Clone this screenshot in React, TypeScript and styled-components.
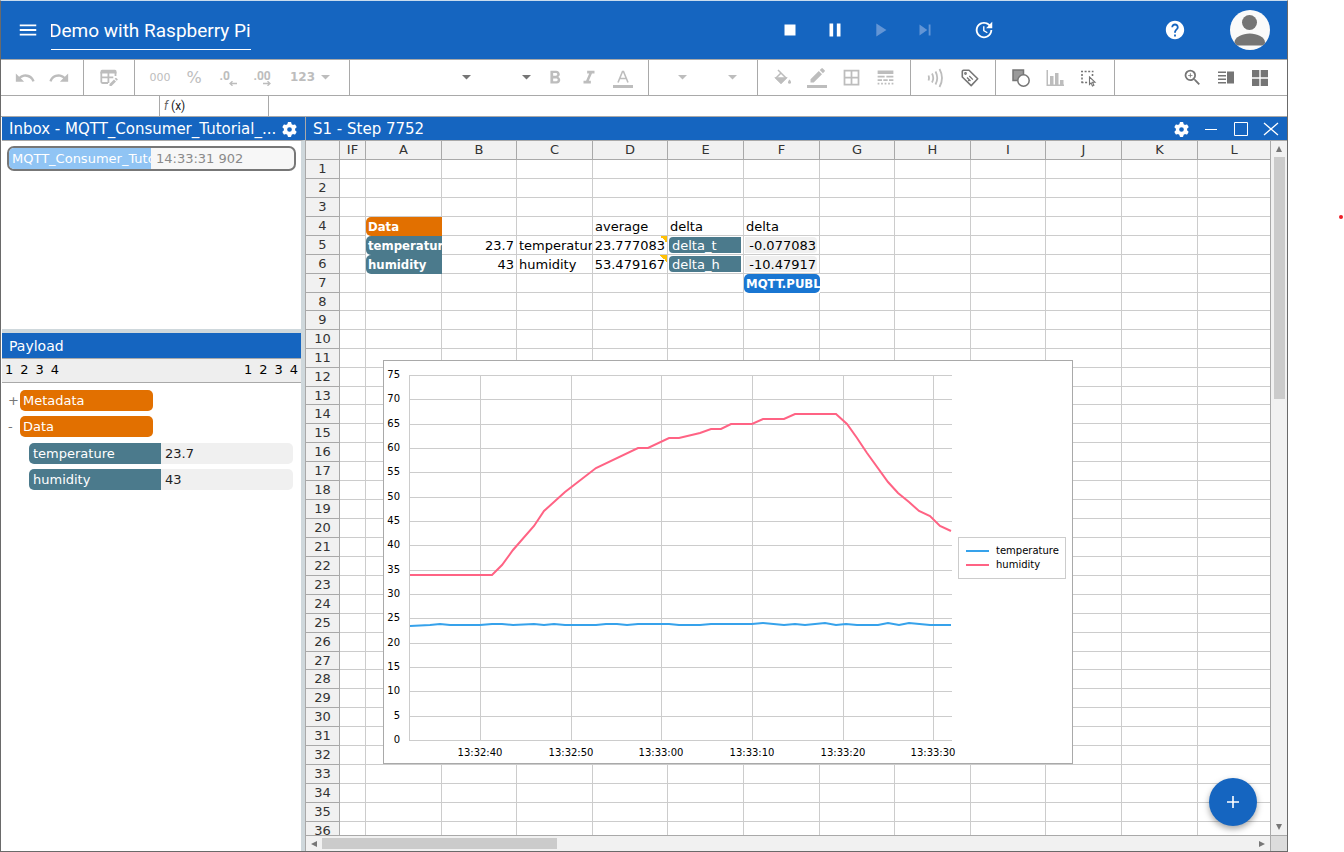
import React from 'react';
import styled, { createGlobalStyle, css } from 'styled-components';
import {
  MdMenu, MdStop, MdPause, MdPlayArrow, MdSkipNext, MdUpdate, MdHelp, MdUndo, MdRedo,
  MdFormatBold, MdFormatItalic, MdBorderAll, MdLineStyle, MdZoomIn,
} from 'react-icons/md';
import { FaGear } from 'react-icons/fa6';

const blue = '#1565c0';
const line = '#a9a9a9';
const splitter = '#cfd8dc';
const sans = "Verdana, 'DejaVu Sans', sans-serif";
const roboto = "Roboto, 'Liberation Sans', sans-serif";

const Global = createGlobalStyle`
  * { box-sizing: border-box; }
  body { margin: 0; background: #fff; font: 13px/17px ${sans}; color: #222; overflow: hidden; }
  button, input, select { font: inherit; color: inherit; background: none; border: 0; padding: 0; margin: 0; outline: 0; }
  button { cursor: pointer; }
  svg { display: block; flex: none; }
`;

const Page = styled.div`
  height: 100vh;
  padding-right: 56px;
  position: relative;
`;
const RedDot = styled.span`
  position: absolute;
  right: 1px;
  top: 215px;
  width: 4px;
  height: 4px;
  border-radius: 2px;
  background: #ee1c25;
`;
const Frame = styled.div`
  height: 100%;
  display: flex;
  flex-direction: column;
  border: 1px solid #6a6a6a;
  border-top-color: #c9dcee;
`;

const Header = styled.header`
  height: 59px;
  flex: none;
  display: flex;
  align-items: center;
  background: ${blue};
  border-bottom: 1px solid ${line};
  color: #fff;
  padding: 0 17px 0 16px;
`;
const TitleInput = styled.input`
  width: 200px;
  height: 38px;
  margin: 1px auto 0 12px;
  font: 19px/24px ${roboto};
  border-bottom: 1px solid #fff;
  text-indent: -2px;
`;
const HeaderButton = styled.button<{ $dim?: boolean }>`
  width: 22px;
  height: 22px;
  color: ${p => (p.$dim ? '#6395d5' : '#fff')};
`;
const Transport = styled.div`
  display: flex;
  gap: 23px;
  margin-right: 37px;
`;
const Spacer = styled.div<{ $w: number }>`
  width: ${p => p.$w}px;
`;
const Avatar = styled.button`
  width: 40px;
  height: 40px;
  margin-left: 44px;
  border-radius: 50%;
  overflow: hidden;
  background: #fafafa;
`;

const Toolbar = styled.div`
  height: 36px;
  flex: none;
  display: flex;
  border-bottom: 1px solid ${line};
`;
const Group = styled.div<{ $pad?: number }>`
  display: flex;
  align-items: center;
  padding: 0 ${p => p.$pad ?? 8}px;
  border-right: 1px solid ${line};
`;
const EndGroup = styled.div`
  display: flex;
  align-items: center;
  margin-left: auto;
  padding-right: 10px;
`;
const Tool = styled.button<{ $on?: boolean; $w?: number }>`
  width: ${p => p.$w ?? 34}px;
  height: 34px;
  display: flex;
  align-items: center;
  justify-content: center;
  color: ${p => (p.$on ? '#757575' : '#bdbdbd')};
`;
const TextTool = styled(Tool)<{ $size: number; $bold?: boolean }>`
  font-size: ${p => p.$size}px;
  font-weight: ${p => (p.$bold ? 700 : 400)};
  gap: 6px;
`;
const Decimal = styled.span`
  width: 17px;
  display: flex;
  flex-direction: column;
  font: 700 12px/10px ${roboto};
  text-align: left;
  padding-top: 2px;
  svg { align-self: flex-end; }
`;
const PickWrap = styled.label<{ $w: number }>`
  width: ${p => p.$w}px;
  height: 26px;
  display: flex;
  align-items: center;
  padding-right: 7px;
  color: #757575;
  & + & { margin-left: 4px; }
  select { flex: 1; min-width: 0; height: 100%; appearance: none; }
`;

const FormulaBar = styled.div`
  height: 21px;
  flex: none;
  display: flex;
  border-bottom: 1px solid ${line};
  font: 12px/20px ${roboto};
`;
const NameBox = styled.input`
  width: 159px;
  border-right: 1px solid ${line};
`;
const Fx = styled.label`
  width: 109px;
  padding-left: 4px;
  border-right: 1px solid ${line};
  i { color: #666; }
`;
const Formula = styled.input`
  flex: 1;
`;

const Body = styled.main`
  flex: 1;
  min-height: 0;
  display: flex;
`;
const Side = styled.aside`
  width: 304px;
  flex: none;
  display: flex;
  flex-direction: column;
  padding-left: 1px;
`;
const PanelTitle = styled.h2<{ $sub?: boolean }>`
  height: ${p => (p.$sub ? 25 : 23)}px;
  flex: none;
  margin: 0;
  padding: 1px 8px 0 7px;
  display: flex;
  align-items: center;
  background: ${blue};
  color: #fff;
  font-size: ${p => (p.$sub ? 14 : 15)}px;
  font-weight: 400;
  white-space: nowrap;
`;
const TitleText = styled.span`
  flex: 1;
`;
const IconButton = styled.button`
  width: 16px;
  height: 16px;
  display: flex;
  align-items: center;
  justify-content: center;
`;
const InboxArea = styled.div`
  height: 189px;
  flex: none;
  padding: 5px 5px 0;
  border-top: 1px solid ${line};
  border-right: 4px solid ${splitter};
`;
const InboxItem = styled.div`
  height: 25px;
  display: flex;
  border: 2px solid #777;
  border-radius: 7px;
  overflow: hidden;
  background: #f7f7f7;
  line-height: 21px;
  color: #8a8a8a;
`;
const InboxName = styled.span`
  width: 142px;
  flex: none;
  padding-left: 3px;
  margin-right: 5px;
  overflow: hidden;
  white-space: nowrap;
  background: #90c4f4;
  color: #fff;
`;
const PayloadArea = styled.section`
  flex: 1;
  border-top: 4px solid ${splitter};
  border-right: 4px solid ${splitter};
`;
const Levels = styled.div`
  height: 25px;
  display: flex;
  align-items: center;
  justify-content: space-between;
  padding: 0 3px 2px;
  background: #eee;
  border: solid ${line};
  border-width: 1px 0;
  color: #000;
`;
const LevelSet = styled.div`
  display: flex;
  gap: 7px;
`;
const Tree = styled.div`
  padding: 7px 8px 0 6px;
  display: flex;
  flex-direction: column;
  gap: 5px;
`;
const Node = styled.div`
  display: flex;
  height: 21px;
  line-height: 21px;
`;
const Toggle = styled.button`
  width: 12px;
  color: #777;
  text-align: left;
`;
const Folder = styled.span`
  width: 133px;
  padding-left: 3px;
  border-radius: 5px;
  background: #e27000;
  color: #fff;
`;
const Leaves = styled.div`
  display: flex;
  flex-direction: column;
  gap: 5px;
  margin-left: 21px;
  padding-top: 1px;
`;
const LeafName = styled.span`
  flex: 1;
  padding-left: 4px;
  border-radius: 5px 0 0 5px;
  background: #4b7a8c;
  color: #fff;
`;
const LeafValue = styled.span`
  flex: 1;
  padding-left: 4px;
  border-radius: 0 5px 5px 0;
  background: #f0f0f0;
`;

const Sheet = styled.section`
  flex: 1;
  min-width: 0;
  display: flex;
  flex-direction: column;
  border-left: 1px solid ${line};
  position: relative;
`;
const WindowButtons = styled.div`
  display: flex;
  gap: 14px;
`;
const SheetRow = styled.div`
  flex: 1;
  min-height: 0;
  display: flex;
  border-top: 1px solid ${line};
`;
const GridArea = styled.div`
  flex: 1;
  min-width: 0;
  overflow: hidden;
  position: relative;
`;
const Grid = styled.table`
  width: 100%;
  table-layout: fixed;
  border-collapse: separate;
  border-spacing: 0;
  th, td {
    height: 19px;
    padding: 0;
    vertical-align: top;
    white-space: nowrap;
    overflow: hidden;
    border: solid #ccc;
    border-width: 0 1px 1px 0;
  }
  tbody tr:is(:nth-child(8), :nth-child(13), :nth-child(27)) > * { height: 18px; }
  th { font-weight: 400; background: #f1f1f1; color: #333; border-color: ${line}; }
  thead th { line-height: 18px; }
  tr > :last-child { border-right: 0; }
`;
type Kind = 'text' | 'num' | 'folder' | 'leaf' | 'key' | 'value' | 'action';
const Cell = styled.div<{ $kind: Kind }>`
  height: 18px;
  line-height: 19px;
  color: #000;
  overflow: hidden;
  ${p => p.$kind === 'text' && css`padding-left: 2px;`}
  ${p => p.$kind === 'num' && css`padding-right: 2px; text-align: right;`}
  ${p => (p.$kind === 'folder' || p.$kind === 'leaf' || p.$kind === 'action') && css`
    height: 19px;
    padding-left: 2px;
    line-height: 20px;
    font-family: 'DejaVu Sans Condensed', 'DejaVu Sans', sans-serif;
    font-weight: 700;
    color: #fff;
    background: ${p.$kind === 'folder' ? '#e27000' : p.$kind === 'leaf' ? '#4b7a8c' : '#1976d2'};
    border-radius: ${p.$kind === 'action' ? '5px' : '5px 0 0 5px'};
  `}
  ${p => (p.$kind === 'key' || p.$kind === 'value') && css`
    height: 16px;
    margin: 1px 2px 1px 1px;
    line-height: 17px;
  `}
  ${p => p.$kind === 'key' && css`
    padding-left: 3px;
    background: #4b7a8c;
    color: #fff;
    border-radius: 4px 0 0 4px;
  `}
  ${p => p.$kind === 'value' && css`
    padding-right: 1px;
    text-align: right;
    background: #f0f0f0;
    border-radius: 0 4px 4px 0;
  `}
`;
const Flagged = styled.td`
  background: linear-gradient(to bottom left, #ffc107 50%, transparent 50%) top right / 7px 7px no-repeat;
`;
const Filled = styled.td`
  && { border-width: 0; }
`;

const VScroll = styled.div`
  width: 17px;
  flex: none;
  display: flex;
  flex-direction: column;
  align-items: center;
  border-left: 1px solid ${line};
  background: #f1f1f1;
`;
const HScroll = styled.div`
  height: 16px;
  flex: none;
  display: flex;
  align-items: center;
  border-top: 1px solid ${line};
  background: #f1f1f1;
`;
const ScrollButton = styled.button`
  width: 16px;
  height: 16px;
  display: flex;
  align-items: center;
  justify-content: center;
  color: #777;
`;
const Thumb = styled.div<{ $vertical?: boolean }>`
  background: #cbcbcb;
  ${p => (p.$vertical
    ? css`width: 11px; height: 242px; margin-bottom: auto;`
    : css`height: 11px; width: 235px; margin-right: auto;`)}
`;
const Corner = styled.div`
  width: 17px;
  height: 100%;
  border-left: 1px solid ${line};
  background: #dcdcdc;
`;
const ChartBox = styled.figure`
  position: absolute;
  left: 77px;
  top: 219px;
  width: 690px;
  height: 404px;
  margin: 0;
  border: 1px solid ${line};
  background: #fff;
  text { font: 10px ${sans}; fill: #000; }
`;
const Fab = styled.button`
  position: absolute;
  right: 30px;
  bottom: 25px;
  width: 48px;
  height: 48px;
  border-radius: 24px;
  display: flex;
  align-items: center;
  justify-content: center;
  background: ${blue};
  color: #fff;
  box-shadow: 0 3px 6px rgba(0, 0, 0, 0.35);
`;

const Caret = () => (
  <svg width="9" height="5" viewBox="0 0 9 5"><path d="M0 0h9L4.500 4.500z" fill="currentColor" /></svg>
);

const cols = [34, 26, 76, 75, 76, 75, 76, 76, 75, 76, 75, 76, 76];
const heads = ['IF', 'A', 'B', 'C', 'D', 'E', 'F', 'G', 'H', 'I', 'J', 'K', 'L'];
const cells: Record<string, [Kind, string]> = {
  A4: ['folder', 'Data'],
  A5: ['leaf', 'temperature'],
  A6: ['leaf', 'humidity'],
  B5: ['num', '23.7'],
  B6: ['num', '43'],
  C5: ['text', 'temperature'],
  C6: ['text', 'humidity'],
  D4: ['text', 'average'],
  D5: ['num', '23.777083'],
  D6: ['num', '53.479167'],
  E4: ['text', 'delta'],
  E5: ['key', 'delta_t'],
  E6: ['key', 'delta_h'],
  F4: ['text', 'delta'],
  F5: ['value', '-0.077083'],
  F6: ['value', '-10.47917'],
  F7: ['action', 'MQTT.PUBLISH'],
};
const flagged = ['D5', 'D6'];
const filled: Kind[] = ['folder', 'leaf', 'action'];

const humidity = '26,214 108,214 118,204 129,189 150,165 160,150 181,131 212,107 254,87 264,87 285,77 295,77 316,72 327,68 337,68 347,63 368,63 379,58 400,58 411,53 452,53 463,63 473,77 483,92 504,121 514,132 525,141 535,150 546,155 556,165 567,170';
const temperature = '26,265 46,264 56,263 66,264 96,264 108,263 118,263 129,264 150,263 160,264 170,263 181,264 212,264 222,263 233,263 243,264 254,263 285,263 295,264 316,264 327,263 368,263 379,262 400,264 411,263 421,264 441,262 452,264 462,263 473,264 494,264 504,262 515,264 525,262 546,264 567,264';
const ticks: [number, string][] = [
  [96, '13:32:40'], [187, '13:32:50'], [277, '13:33:00'], [368, '13:33:10'], [459, '13:33:20'], [549, '13:33:30'],
];

function Chart() {
  return (
    <ChartBox>
      <svg width="688" height="402" role="img" aria-label="temperature and humidity over time">
        <g stroke="#ccc" fill="none">
          {Array.from({ length: 16 }, (_, i) => {
            const y = Math.round(14 + (i * 365) / 15) + 0.5;
            return <path key={i} d={`M25 ${y}H568`} />;
          })}
          <path d="M25.500 14V380" />
          {ticks.map(([x]) => <path key={x} d={`M${x}.5 14V380`} />)}
        </g>
        {Array.from({ length: 16 }, (_, i) => (
          <text key={i} x="16" y={Math.round(17 + (i * 365) / 15)} textAnchor="end">{75 - i * 5}</text>
        ))}
        {ticks.map(([x, t]) => <text key={t} x={x} y="395" textAnchor="middle">{t}</text>)}
        <polyline points={humidity} fill="none" stroke="#ff6384" strokeWidth="2" />
        <polyline points={temperature} fill="none" stroke="#36a2eb" strokeWidth="2" />
        <rect x="574.500" y="176.500" width="107" height="41" fill="#fff" stroke="#ccc" />
        <path d="M582 190h23" stroke="#36a2eb" strokeWidth="2" />
        <path d="M582 204h23" stroke="#ff6384" strokeWidth="2" />
        <text x="612" y="193">temperature</text>
        <text x="612" y="207">humidity</text>
      </svg>
    </ChartBox>
  );
}

function Spreadsheet() {
  return (
    <Grid>
      <colgroup>
        {cols.map((w, i) => <col key={i} width={w} />)}
        <col />
      </colgroup>
      <thead>
        <tr>
          <th />
          {heads.map(h => <th key={h} scope="col">{h}</th>)}
        </tr>
      </thead>
      <tbody>
        {Array.from({ length: 36 }, (_, r) => (
          <tr key={r}>
            <th scope="row">{r + 1}</th>
            {heads.map(h => {
              const id = `${h}${r + 1}`;
              const c = cells[id];
              const Td = flagged.includes(id) ? Flagged : c && filled.includes(c[0]) ? Filled : 'td';
              return <Td key={h}>{c && <Cell $kind={c[0]}>{c[1]}</Cell>}</Td>;
            })}
          </tr>
        ))}
      </tbody>
    </Grid>
  );
}

export default function App() {
  return (
    <Page>
      <Global />
      <Frame>
        <Header>
          <HeaderButton aria-label="Menu"><MdMenu size={22} /></HeaderButton>
          <TitleInput aria-label="Title" defaultValue="Demo with Raspberry Pi" />
          <Transport>
            <HeaderButton aria-label="Stop"><MdStop size={22} /></HeaderButton>
            <HeaderButton aria-label="Pause"><MdPause size={22} /></HeaderButton>
            <HeaderButton aria-label="Play" $dim><MdPlayArrow size={22} /></HeaderButton>
            <HeaderButton aria-label="Step" $dim><MdSkipNext size={22} /></HeaderButton>
          </Transport>
          <HeaderButton aria-label="Update"><MdUpdate size={22} /></HeaderButton>
          <Spacer $w={169} />
          <HeaderButton aria-label="Help"><MdHelp size={22} /></HeaderButton>
          <Avatar aria-label="Account">
            <svg width="40" height="40" viewBox="0 0 40 40" fill="#757575">
              <circle cx="19.500" cy="12.500" r="7.500" />
              <path d="M4.500 35.500v-3c0-5.500 8-9 15.300-9s15.200 3.500 15.200 9v3z" />
            </svg>
          </Avatar>
        </Header>

        <Toolbar>
          <Group $pad={7}>
            <Tool aria-label="Undo"><MdUndo size={22} /></Tool>
            <Tool aria-label="Redo"><MdRedo size={22} /></Tool>
          </Group>
          <Group>
            <Tool aria-label="Edit table">
              <svg width="18" height="18" viewBox="0 0 18 18" fill="none" stroke="currentColor" strokeWidth="1.800">
                <path d="M8 14H2.500a1.200 1.200 0 0 1-1.200-1.200V3M15.500 3v4M1.300 8.300h12M8.400 4v10" />
                <path d="M.5 4.500V2.200A1.500 1.500 0 0 1 2 .7h13a1.500 1.500 0 0 1 1.500 1.500v2.300z" fill="currentColor" stroke="none" />
                <path d="M9.500 17v-2l4.500-4.500 2 2L11.500 17zM14.700 9.800l.8-.8a.6.6 0 0 1 .9 0l1.100 1.100a.6.6 0 0 1 0 .9l-.8.800z" fill="currentColor" stroke="none" />
              </svg>
            </Tool>
          </Group>
          <Group>
            <TextTool $size={11}>000</TextTool>
            <TextTool $size={16}>%</TextTool>
            <Tool aria-label="Fewer decimals">
              <Decimal>.0
                <svg width="8" height="5" viewBox="0 0 8 5"><path d="M8 2.500H1M3.500 .2L1 2.500l2.500 2.300" fill="none" stroke="currentColor" strokeWidth="1.300" /></svg>
              </Decimal>
            </Tool>
            <Tool aria-label="More decimals">
              <Decimal>.00
                <svg width="8" height="5" viewBox="0 0 8 5"><path d="M0 2.500h7M4.500 .2L7 2.500 4.500 4.800" fill="none" stroke="currentColor" strokeWidth="1.300" /></svg>
              </Decimal>
            </Tool>
            <TextTool $size={12} $bold $w={62}>123 <Caret /></TextTool>
          </Group>
          <Group>
            <PickWrap $w={120}><select aria-label="Font"><option /></select><Caret /></PickWrap>
            <PickWrap $w={56}><select aria-label="Font size"><option /></select><Caret /></PickWrap>
            <Tool aria-label="Bold"><MdFormatBold size={22} /></Tool>
            <Tool aria-label="Italic"><MdFormatItalic size={22} /></Tool>
            <Tool aria-label="Text color">
              <svg width="20" height="20" viewBox="0 0 20 20">
                <path d="M5 14.500L9.500 3.500h1L15 14.500M6.800 10.500h6.400" fill="none" stroke="currentColor" strokeWidth="1.600" />
                <path d="M0 17h20v3H0z" fill="currentColor" />
              </svg>
            </Tool>
          </Group>
          <Group $pad={4}>
            <Tool aria-label="Horizontal alignment" $w={58}><Caret /></Tool>
            <Tool aria-label="Vertical alignment" $w={42}><Caret /></Tool>
          </Group>
          <Group>
            <Tool aria-label="Fill color">
              <svg width="18" height="18" viewBox="0 0 18 18" fill="none" stroke="currentColor" strokeWidth="1.500">
                <path d="M4 1l8 8-5 5-5-5 5-5" />
                <path d="M2 9h10l-5 5z" fill="currentColor" />
                <path d="M15.500 10.500c1 1.300 1.500 2 1.500 2.700a1.500 1.500 0 0 1-3 0c0-.7.5-1.400 1.500-2.700z" fill="currentColor" stroke="none" />
              </svg>
            </Tool>
            <Tool aria-label="Border color">
              <svg width="20" height="20" viewBox="0 0 20 20" fill="currentColor">
                <path d="M3.500 14.500v-3.200l8.300-8.300 3.200 3.200-8.300 8.300zM12.700 2.100l1.700-1.700a1 1 0 0 1 1.400 0l1.800 1.800a1 1 0 0 1 0 1.400l-1.700 1.700z" />
                <path d="M0 17h20v3H0z" />
              </svg>
            </Tool>
            <Tool aria-label="Borders"><MdBorderAll size={21} /></Tool>
            <Tool aria-label="Line style"><MdLineStyle size={21} /></Tool>
          </Group>
          <Group>
            <Tool aria-label="Stream">
              <svg width="18" height="20" viewBox="0 0 18 20" fill="none" stroke="currentColor" strokeWidth="1.800">
                <path d="M1.500 7.500q1 2.500 0 5M5 5.500q2.500 4.500 0 9M8.500 3.500q3.500 6.500 0 13M12.500 1q5 9 0 18" />
              </svg>
            </Tool>
            <Tool aria-label="Tag" $on>
              <svg width="18" height="18" viewBox="0 0 18 18" fill="none" stroke="currentColor" strokeWidth="1.600">
                <path d="M2.500 1.200H8l8.700 8.600-6.500 6.800L1.300 8V2.400a1.200 1.200 0 0 1 1.200-1.200z" strokeLinejoin="round" />
                <circle cx="4.500" cy="4.500" r=".6" />
                <path d="M6 8.500l3.500 3.500M8.300 7l3.600 3.600M7.200 11l1 1" strokeWidth="1.300" />
              </svg>
            </Tool>
          </Group>
          <Group>
            <Tool aria-label="Shapes" $on>
              <svg width="18" height="18" viewBox="0 0 18 18" stroke="currentColor" strokeWidth="1.500">
                <path d="M1 1h10.500v10.500H1z" fill="#9a9a9a" />
                <circle cx="11.500" cy="11.500" r="5.700" fill="#fff" />
              </svg>
            </Tool>
            <Tool aria-label="Insert chart">
              <svg width="18" height="18" viewBox="0 0 18 18" fill="currentColor">
                <path d="M.5 1H2v14.500h16V17H.5zM4 7h3.500v8.500H4zM9 4h3.500v11.500H9zM14 11h3.500v4.500H14z" />
              </svg>
            </Tool>
            <Tool aria-label="Select region" $on>
              <svg width="18" height="18" viewBox="0 0 18 18" fill="none" stroke="currentColor">
                <path d="M1 2.500h12.500M2 5v9M1.500 13.500h6M12.500 5v2" strokeWidth="1.600" strokeDasharray="2 1.600" />
                <path d="M9.500 8l5.500 5.200h-2.500l1.400 3-1.500.7-1.300-3-1.600 1.500z" strokeWidth="1.100" />
              </svg>
            </Tool>
          </Group>
          <EndGroup>
            <Tool aria-label="Zoom" $on><MdZoomIn size={21} /></Tool>
            <Tool aria-label="Side view" $on>
              <svg width="16" height="13" viewBox="0 0 16 13" fill="currentColor">
                <path d="M0 .5h8V2H0zM0 4h8v1.500H0zM0 7.500h8V9H0zM0 11h8v1.500H0zM9 .5h7v12H9z" />
              </svg>
            </Tool>
            <Tool aria-label="Grid view" $on>
              <svg width="16" height="16" viewBox="0 0 16 16" fill="currentColor">
                <path d="M0 0h7.300v7.300H0zM8.700 0H16v7.300H8.700zM0 8.700h7.300V16H0zM8.700 8.700H16V16H8.700z" />
              </svg>
            </Tool>
          </EndGroup>
        </Toolbar>

        <FormulaBar>
          <NameBox aria-label="Cell name" />
          <Fx htmlFor="formula"><i>f</i> (x)</Fx>
          <Formula id="formula" />
        </FormulaBar>

        <Body>
          <Side>
            <PanelTitle>
              <TitleText>Inbox - MQTT_Consumer_Tutorial_...</TitleText>
              <IconButton aria-label="Inbox settings"><FaGear size={15} /></IconButton>
            </PanelTitle>
            <InboxArea>
              <InboxItem>
                <InboxName>MQTT_Consumer_Tutorial</InboxName>
                14:33:31 902
              </InboxItem>
            </InboxArea>
            <PayloadArea>
              <PanelTitle $sub>Payload</PanelTitle>
              <Levels>
                {[0, 1].map(s => (
                  <LevelSet key={s}>
                    {[1, 2, 3, 4].map(n => <button key={n}>{n}</button>)}
                  </LevelSet>
                ))}
              </Levels>
              <Tree>
                <Node><Toggle>+</Toggle><Folder>Metadata</Folder></Node>
                <Node><Toggle>-</Toggle><Folder>Data</Folder></Node>
                <Leaves>
                  <Node><LeafName>temperature</LeafName><LeafValue>23.7</LeafValue></Node>
                  <Node><LeafName>humidity</LeafName><LeafValue>43</LeafValue></Node>
                </Leaves>
              </Tree>
            </PayloadArea>
          </Side>

          <Sheet>
            <PanelTitle>
              <TitleText>S1 - Step 7752</TitleText>
              <WindowButtons>
                <IconButton aria-label="Sheet settings"><FaGear size={15} /></IconButton>
                <IconButton aria-label="Minimize">
                  <svg width="16" height="16"><path d="M2 8.500h12" stroke="#fff" /></svg>
                </IconButton>
                <IconButton aria-label="Maximize">
                  <svg width="16" height="16"><path d="M1.500 1.500h13v13h-13z" stroke="#fff" fill="none" /></svg>
                </IconButton>
                <IconButton aria-label="Close">
                  <svg width="16" height="16"><path d="M1 2l14 12M15 2L1 14" stroke="#fff" strokeWidth="1.300" /></svg>
                </IconButton>
              </WindowButtons>
            </PanelTitle>
            <SheetRow>
              <GridArea>
                <Spreadsheet />
                <Chart />
              </GridArea>
              <VScroll>
                <ScrollButton aria-label="Scroll up"><svg width="6" height="6"><path d="M3 0l3 6H0z" fill="currentColor" /></svg></ScrollButton>
                <Thumb $vertical />
                <ScrollButton aria-label="Scroll down"><svg width="6" height="6"><path d="M3 6l3-6H0z" fill="currentColor" /></svg></ScrollButton>
              </VScroll>
            </SheetRow>
            <HScroll>
              <ScrollButton aria-label="Scroll left"><svg width="6" height="6"><path d="M0 3l6-3v6z" fill="currentColor" /></svg></ScrollButton>
              <Thumb />
              <ScrollButton aria-label="Scroll right"><svg width="6" height="6"><path d="M6 3L0 0v6z" fill="currentColor" /></svg></ScrollButton>
              <Corner />
            </HScroll>
            <Fab aria-label="Add">
              <svg width="12" height="12"><path d="M6 0v12M0 6h12" stroke="#fff" strokeWidth="1.600" /></svg>
            </Fab>
          </Sheet>
        </Body>
      </Frame>
      <RedDot />
    </Page>
  );
}
